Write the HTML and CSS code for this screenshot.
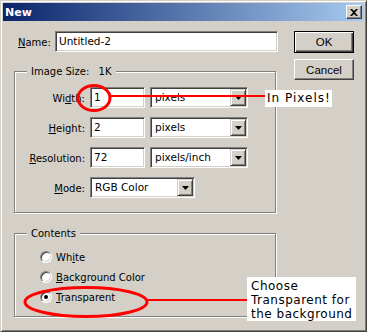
FILE: index.html
```html
<!DOCTYPE html>
<html lang="en">
<head>
  <meta charset="UTF-8" />
  <title>New</title>
  <link rel="stylesheet" href="styles.css">
</head>
<body>
  <div class="stage">
    <div class="window">
      <div class="titlebar">
        <span class="title">New</span>
        <span class="close">
          <svg width="8" height="7" viewBox="0 0 8 7"><path d="M0 0h2l2 2 2-2h2L5 3.5 8 7H6L4 5 2 7H0l3-3.5z" fill="#000"/></svg>
        </span>
      </div>

      <div class="client">
        <div class="main">
          <div class="name-row">
            <label class="name-label"><u>N</u>ame:</label>
            <div class="field name-field">Untitled-2</div>
          </div>

          <fieldset class="group size-group">
            <legend>Image Size: <span class="size">1K</span></legend>
            <div class="grid">
              <label>Wi<u>d</u>th:</label>
              <div class="field">1</div>
              <div class="select"><span>pixels</span><span class="drop"><svg width="7" height="4"><path d="M0 0h7L3.5 4z" fill="#000"/></svg></span></div>

              <label><u>H</u>eight:</label>
              <div class="field">2</div>
              <div class="select"><span>pixels</span><span class="drop"><svg width="7" height="4"><path d="M0 0h7L3.5 4z" fill="#000"/></svg></span></div>

              <label><u>R</u>esolution:</label>
              <div class="field">72</div>
              <div class="select"><span>pixels/inch</span><span class="drop"><svg width="7" height="4"><path d="M0 0h7L3.5 4z" fill="#000"/></svg></span></div>

              <label><u>M</u>ode:</label>
              <div class="select mode"><span>RGB Color</span><span class="drop"><svg width="7" height="4"><path d="M0 0h7L3.5 4z" fill="#000"/></svg></span></div>
            </div>
          </fieldset>

          <fieldset class="group contents-group">
            <legend>Contents</legend>
            <div class="radios">
              <div class="radio-row"><span class="radio"></span><span>Wh<u>i</u>te</span></div>
              <div class="radio-row"><span class="radio"></span><span><u>B</u>ackground Color</span></div>
              <div class="radio-row"><span class="radio checked"></span><span><u>T</u>ransparent</span></div>
            </div>
          </fieldset>
        </div>

        <div class="buttons">
          <div class="btn default"><span>OK</span></div>
          <div class="btn">Cancel</div>
        </div>
      </div>
    </div>

    <!-- red annotations drawn over the dialog -->
    <svg class="marks" width="367" height="332">
      <ellipse cx="94" cy="98" rx="16" ry="12.5" fill="none" stroke="#f00" stroke-width="3"/>
      <line x1="110" y1="96" x2="266" y2="96" stroke="#f00" stroke-width="2"/>
      <ellipse cx="86" cy="302" rx="61" ry="14.5" fill="none" stroke="#f00" stroke-width="3"/>
      <line x1="146" y1="300" x2="248" y2="300" stroke="#f00" stroke-width="2"/>
    </svg>
    <div class="callout pixels">In Pixels!</div>
    <div class="callout choose">Choose<br>Transparent for<br>the background</div>
  </div>
</body>
</html>
```

FILE: styles.css
```css
:root {
  --face: #d4d0c8;
  --shadow: #808080;
  --dark: #404040;
  --light: #ffffff;
}

body {
  margin: 0;
  font-family: "DejaVu Sans", Tahoma, sans-serif;
  font-size: 10px;
  color: #000;
}

.stage {
  position: relative;
  width: 367px;
  height: 332px;
}

.window {
  width: 367px;
  height: 332px;
  box-sizing: border-box;
  background: var(--face);
  border: 1px solid;
  border-color: var(--face) var(--dark) var(--dark) var(--face);
  box-shadow: inset 1px 1px var(--light), inset -1px -1px var(--shadow);
  padding: 2px;
}

.titlebar {
  height: 18px;
  display: flex;
  align-items: center;
  justify-content: space-between;
  padding: 0 2px;
  background: linear-gradient(to right, #0a246a, #a6caf0);
}

.title {
  color: #fff;
  font: bold 11px "DejaVu Sans", sans-serif;
}

.close {
  width: 16px;
  height: 14px;
  box-sizing: border-box;
  display: flex;
  align-items: center;
  justify-content: center;
  background: var(--face);
  border: 1px solid;
  border-color: var(--light) var(--dark) var(--dark) var(--light);
  box-shadow: inset -1px -1px var(--shadow);
}

.client {
  display: flex;
  gap: 17px;
  padding: 10px 0 0 11px;
}

.main {
  width: 263px;
  flex: none;
}

.name-row {
  display: flex;
  height: 21px;
}

.name-label {
  width: 37px;
  padding: 5px 0 0 4px;
  line-height: 13px;
  flex: none;
}

.field {
  height: 21px;
  box-sizing: border-box;
  background: #fff;
  border: 1px solid;
  border-color: var(--shadow) var(--light) var(--light) var(--shadow);
  box-shadow: inset 1px 1px var(--dark), inset -1px -1px var(--face);
  padding: 3px 0 0 3px;
  font-size: 10.5px;
  line-height: 13px;
  white-space: nowrap;
}

.name-field {
  width: 223px;
  flex: none;
}

.group {
  margin: 13px 0 0;
  padding: 0;
  width: 262px;
  box-sizing: border-box;
  border: 1px solid var(--shadow);
  box-shadow: 1px 1px var(--light), inset 1px 1px var(--light);
  min-width: 0;
}

.group legend {
  margin-left: 12px;
  padding: 0 4px;
  line-height: 13px;
  background: var(--face);
}

.size {
  margin-left: 6px;
}

.grid {
  display: grid;
  grid-template-columns: 70px 55px 98px;
  grid-auto-rows: 21px;
  column-gap: 5px;
  row-gap: 9px;
  padding: 9px 0 14px;
}

.grid label {
  text-align: right;
  align-self: center;
  line-height: 13px;
  padding-top: 1px;
}

.select {
  display: flex;
  height: 21px;
  box-sizing: border-box;
  background: #fff;
  border: 1px solid;
  border-color: var(--shadow) var(--light) var(--light) var(--shadow);
  box-shadow: inset 1px 1px var(--dark), inset -1px -1px var(--face);
  padding: 1px;
}

.select span:first-child {
  flex: 1;
  padding: 2px 0 0 3px;
  font-size: 10.5px;
  line-height: 13px;
  white-space: nowrap;
  overflow: hidden;
}

.select.mode {
  grid-column: span 2;
  width: 105px;
}

.drop {
  width: 16px;
  box-sizing: border-box;
  display: flex;
  align-items: center;
  justify-content: center;
  background: var(--face);
  border: 1px solid;
  border-color: var(--face) var(--dark) var(--dark) var(--face);
  box-shadow: inset 1px 1px var(--light), inset -1px -1px var(--shadow);
}

.contents-group {
  margin-top: 14px;
}

.radios {
  display: flex;
  flex-direction: column;
  gap: 6px;
  padding: 10px 0 12px 25px;
}

.radio-row {
  display: flex;
  align-items: center;
  gap: 4px;
  height: 14px;
  line-height: 13px;
}

.radio {
  width: 12px;
  height: 12px;
  box-sizing: border-box;
  border-radius: 50%;
  background: #fff;
  border: 1px solid;
  border-color: var(--shadow) var(--light) var(--light) var(--shadow);
  box-shadow: inset 1px 1px var(--dark), inset -1px -1px var(--face);
  display: flex;
  align-items: center;
  justify-content: center;
}

.radio.checked::after {
  content: "";
  width: 4px;
  height: 4px;
  border-radius: 50%;
  background: #000;
}

.buttons {
  display: flex;
  flex-direction: column;
  gap: 6px;
}

.btn {
  width: 60px;
  height: 21px;
  box-sizing: border-box;
  display: flex;
  align-items: center;
  justify-content: center;
  background: var(--face);
  border: 1px solid;
  border-color: var(--light) var(--dark) var(--dark) var(--light);
  box-shadow: inset -1px -1px var(--shadow);
  font-family: "Liberation Sans", Arial, sans-serif;
  font-size: 11.5px;
}

.btn.default {
  height: 22px;
  border: 1px solid #000;
  box-shadow: inset 1px 1px var(--light), inset -1px -1px var(--dark), inset -2px -2px var(--shadow);
}

.marks {
  position: absolute;
  left: 0;
  top: 0;
  pointer-events: none;
}

.callout {
  position: absolute;
  background: #fff;
  font-family: "DejaVu Sans", sans-serif;
  font-size: 12px;
  letter-spacing: 0.5px;
  line-height: 14px;
  box-sizing: border-box;
}

.callout.pixels {
  left: 265px;
  top: 90px;
  width: 67px;
  height: 17px;
  padding: 1px 0 0 2px;
  letter-spacing: 1px;
}

.callout.choose {
  left: 247px;
  top: 277px;
  width: 109px;
  height: 44px;
  padding: 2px 0 0 4px;
}
```
